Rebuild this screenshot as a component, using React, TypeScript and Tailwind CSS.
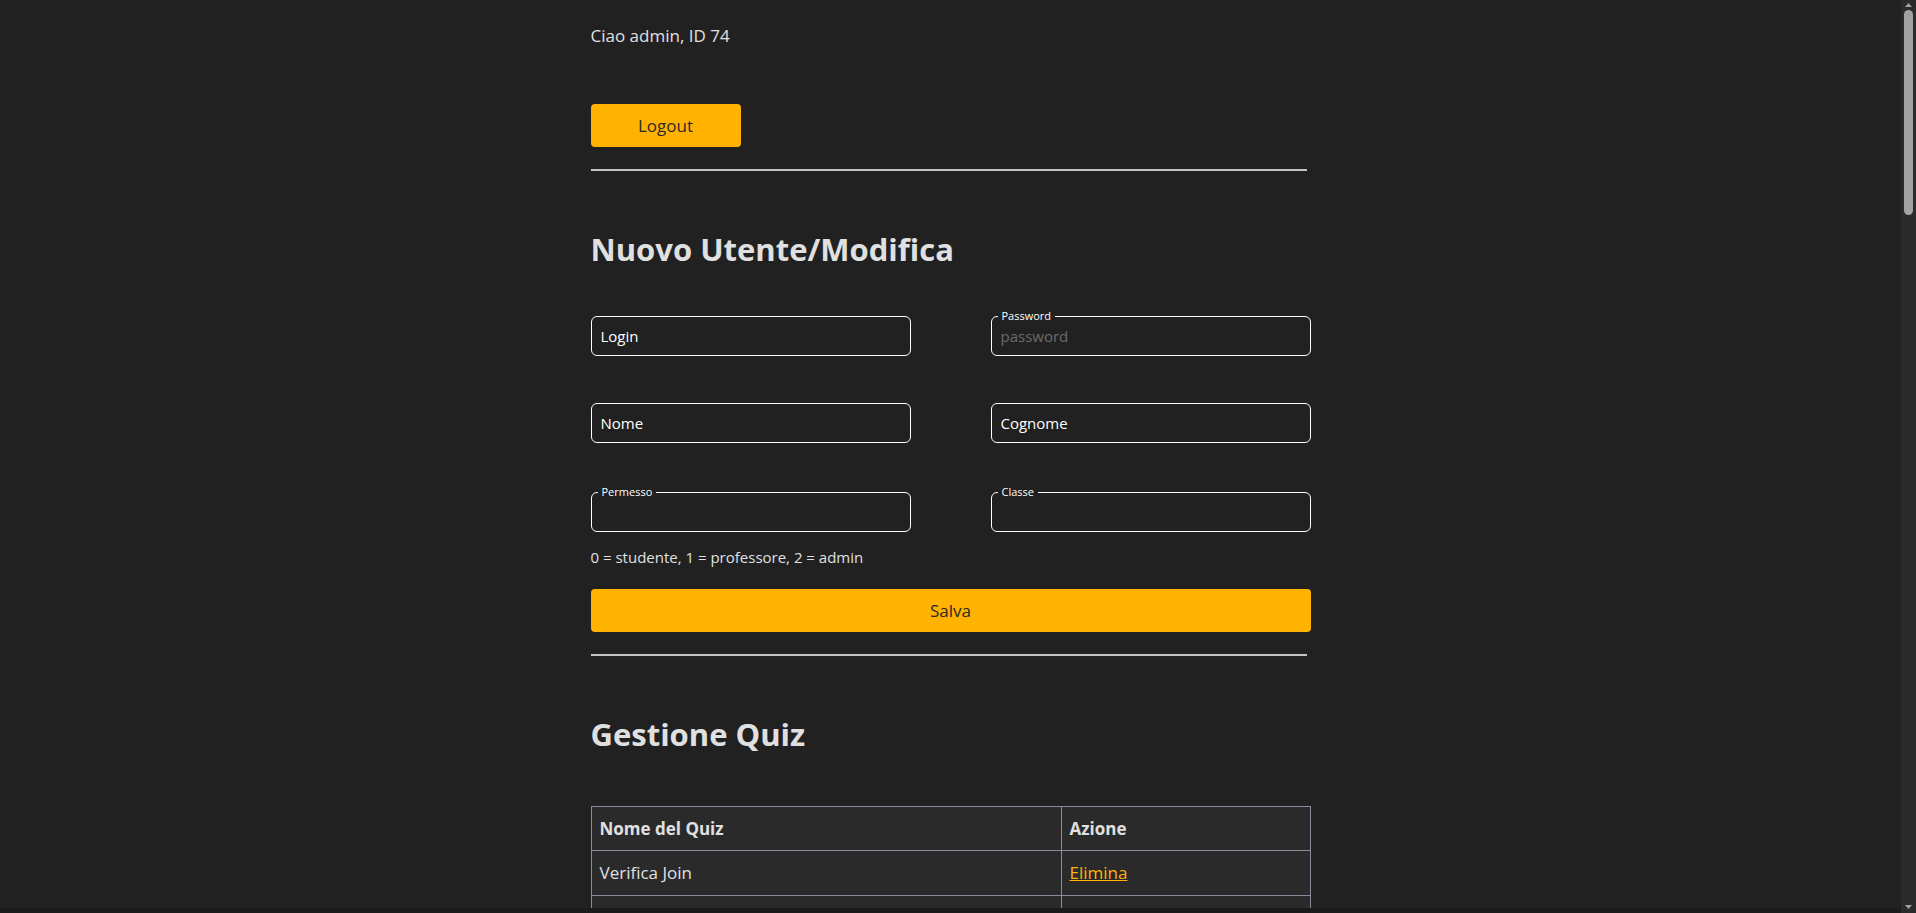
import { useState } from "react";

type Quiz = { id: number; name: string };

const quizzes: Quiz[] = [
  { id: 1, name: "Verifica Join" },
  { id: 2, name: "Verifica SQL base" },
  { id: 3, name: "Normalizzazione" },
  { id: 4, name: "Modello E/R" },
  { id: 5, name: "Algebra relazionale" },
  { id: 6, name: "Query annidate" },
  { id: 7, name: "Transazioni" },
  { id: 8, name: "Indici e viste" },
];

const users = [
  ["admin", "Admin", "Admin", "2", ""],
  ["mrossi", "Mario", "Rossi", "1", ""],
  ["lbianchi", "Luca", "Bianchi", "0", "5A"],
  ["gverdi", "Giulia", "Verdi", "0", "5A"],
  ["aneri", "Anna", "Neri", "0", "5B"],
  ["fgalli", "Francesco", "Galli", "0", "5B"],
  ["sconti", "Sara", "Conti", "0", "4A"],
  ["mmarino", "Marco", "Marino", "0", "4A"],
  ["cricci", "Chiara", "Ricci", "0", "4B"],
  ["dcolombo", "Davide", "Colombo", "0", "4B"],
  ["efontana", "Elena", "Fontana", "1", ""],
  ["pgreco", "Paolo", "Greco", "0", "5A"],
  ["ssantoro", "Simone", "Santoro", "0", "5B"],
  ["mmoretti", "Martina", "Moretti", "0", "4A"],
  ["abarbieri", "Andrea", "Barbieri", "0", "4B"],
  ["flombardi", "Federica", "Lombardi", "0", "5A"],
  ["rferrari", "Riccardo", "Ferrari", "1", ""],
  ["vesposito", "Valentina", "Esposito", "0", "5B"],
  ["tromano", "Tommaso", "Romano", "0", "4A"],
  ["acosta", "Alessia", "Costa", "0", "4B"],
  ["gbruno", "Giorgio", "Bruno", "0", "5A"],
  ["lgallo", "Laura", "Gallo", "0", "5B"],
  ["nmancini", "Nicola", "Mancini", "0", "4A"],
  ["irizzo", "Ilaria", "Rizzo", "0", "4B"],
  ["fleone", "Filippo", "Leone", "0", "5A"],
  ["bcaruso", "Beatrice", "Caruso", "0", "5B"],
  ["emartini", "Emanuele", "Martini", "0", "4A"],
  ["cvitale", "Camilla", "Vitale", "0", "4B"],
  ["sferri", "Stefano", "Ferri", "1", ""],
  ["alongo", "Aurora", "Longo", "0", "5A"],
];

const font = "font-['Open_Sans','Liberation_Sans',sans-serif]";

const Field = ({
  label,
  placeholder,
  floating,
  type = "text",
}: {
  label: string;
  placeholder?: string;
  floating?: boolean;
  type?: string;
}) => {
  const [value, setValue] = useState("");
  return (
    <div className="relative h-10 rounded-md border border-white">
      {floating && (
        <span className="absolute -top-[9px] left-[6px] bg-[#212121] px-1 text-[11px] leading-4 text-white">
          {label}
        </span>
      )}
      <input
        type={type}
        value={value}
        onChange={(e) => setValue(e.target.value)}
        placeholder={floating ? placeholder : label}
        className={
          floating
            ? "h-full w-full bg-transparent px-[9px] text-[15px] text-white outline-none placeholder:text-[#6b6b6b]"
            : "h-full w-full bg-transparent px-[9px] text-[15px] text-white outline-none placeholder:text-white"
        }
      />
    </div>
  );
};

// fake browser scrollbar, the headless window hides the real one
const ScrollBar = () => (
  <div className="flex w-[15px] shrink-0 flex-col items-center bg-[#2b2b2b]">
    <svg width="9" height="8" viewBox="0 0 9 8" className="mt-[1px]">
      <path d="M4.5 2 L8 6 L1 6 Z" fill="#a3a3a3" />
    </svg>
    <div className="mt-[1px] h-[205px] w-[9px] rounded-full bg-[#a3a3a3]" />
    <div className="flex-1" />
    <svg width="9" height="8" viewBox="0 0 9 8" className="mb-[2px]">
      <path d="M1 2 L8 2 L4.5 6 Z" fill="#a3a3a3" />
    </svg>
  </div>
);

export default function App() {
  return (
    <div className={`flex h-screen bg-[#212121] ${font} text-[#e0e0e0]`}>
      <div className="flex flex-1 flex-col">
        <div className="flex-1 overflow-y-auto [scrollbar-width:none]">
          <div className="mx-auto w-[720px] pb-16 pt-[22px]">
            <p className="text-[17px] leading-[27px]">Ciao admin, ID 74</p>

            <button className="mt-[55px] h-[43px] w-[150px] rounded-[4px] bg-[#ffb300] text-[17px] text-[#2a2a2a]">
              Logout
            </button>
            <hr className="mt-[22px] w-[716px] border-t-2 border-[#c4c4c4]" />

            <h2 className="mt-[58px] text-[31px] font-bold leading-10">
              Nuovo Utente/Modifica
            </h2>

            <div className="mt-[47px] grid grid-cols-2 gap-x-20">
              <Field label="Login" />
              <Field label="Password" placeholder="password" floating type="password" />
            </div>
            <div className="mt-[47px] grid grid-cols-2 gap-x-20">
              <Field label="Nome" />
              <Field label="Cognome" />
            </div>
            <div className="mt-[49px] grid grid-cols-2 gap-x-20">
              <Field label="Permesso" floating />
              <Field label="Classe" floating />
            </div>
            <p className="mt-[13px] text-[15px] leading-6">
              0 = studente, 1 = professore, 2 = admin
            </p>

            <button className="mt-5 h-[43px] w-full rounded-[4px] bg-[#ffb300] text-[17px] text-[#2a2a2a]">
              Salva
            </button>
            <hr className="mt-[22px] w-[716px] border-t-2 border-[#c4c4c4]" />

            <h2 className="mt-[58px] text-[31px] font-bold leading-10">Gestione Quiz</h2>

            <table className="mt-[52px] w-full border-collapse bg-[#2a2a2a] text-[17px]">
              <thead>
                <tr>
                  <th className="h-11 border border-[#8b8b9b] px-2 text-left font-bold">
                    Nome del Quiz
                  </th>
                  <th className="h-11 w-[249px] border border-[#8b8b9b] px-2 text-left font-bold">
                    Azione
                  </th>
                </tr>
              </thead>
              <tbody>
                {quizzes.map((q) => (
                  <tr key={q.id}>
                    <td className="h-[45px] border border-[#8b8b9b] px-2">{q.name}</td>
                    <td className="h-[45px] border border-[#8b8b9b] px-2">
                      <a href="#" className="text-[#ffb300] underline">
                        Elimina
                      </a>
                    </td>
                  </tr>
                ))}
              </tbody>
            </table>

            <hr className="mt-[40px] w-[716px] border-t-2 border-[#c4c4c4]" />
            <h2 className="mt-[58px] text-[31px] font-bold leading-10">Gestione Utenti</h2>

            <table className="mt-[52px] w-full border-collapse bg-[#2a2a2a] text-[17px]">
              <thead>
                <tr>
                  {["Login", "Nome", "Cognome", "Permesso", "Classe", "Azione"].map((h) => (
                    <th key={h} className="h-11 border border-[#8b8b9b] px-2 text-left font-bold">
                      {h}
                    </th>
                  ))}
                </tr>
              </thead>
              <tbody>
                {users.map((u) => (
                  <tr key={u[0]}>
                    {u.map((c, i) => (
                      <td key={i} className="h-[45px] border border-[#8b8b9b] px-2">
                        {c}
                      </td>
                    ))}
                    <td className="h-[45px] border border-[#8b8b9b] px-2">
                      <a href="#" className="text-[#ffb300] underline">
                        Modifica
                      </a>
                    </td>
                  </tr>
                ))}
              </tbody>
            </table>
          </div>
        </div>
        <div className="h-[5px] shrink-0 bg-[#1b1b1b]" />
      </div>
      <ScrollBar />
    </div>
  );
}
